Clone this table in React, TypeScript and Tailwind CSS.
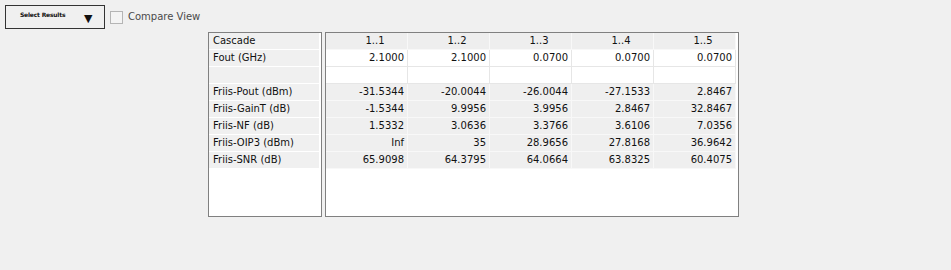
import React from "react";

const labels = [
  "Cascade",
  "Fout (GHz)",
  "",
  "Friis-Pout (dBm)",
  "Friis-GainT (dB)",
  "Friis-NF (dB)",
  "Friis-OIP3 (dBm)",
  "Friis-SNR (dB)",
];

const headers = ["1..1", "1..2", "1..3", "1..4", "1..5"];

const fout = ["2.1000", "2.1000", "0.0700", "0.0700", "0.0700"];

const data = [
  ["-31.5344", "-20.0044", "-26.0044", "-27.1533", "2.8467"],
  ["-1.5344", "9.9956", "3.9956", "2.8467", "32.8467"],
  ["1.5332", "3.0636", "3.3766", "3.6106", "7.0356"],
  ["Inf", "35", "28.9656", "27.8168", "36.9642"],
  ["65.9098", "64.3795", "64.0664", "63.8325", "60.4075"],
];

const font = { fontFamily: '"DejaVu Sans", Verdana, sans-serif' };

export default function App() {
  return (
    <div
      className="w-[951px] h-[270px] bg-[#f0f0f0] text-[10px] text-[#111111] overflow-hidden"
      style={font}
    >
      <div className="flex items-center pl-[5px] pt-[5px]">
        <div className="w-[100px] h-[24px] border border-[#333333] bg-[#f0f0f0] flex items-start pt-[6px] pl-[14px] relative">
          <span className="text-[6px] font-bold leading-none tracking-[-0.2px]">Select Results</span>
          <span className="absolute left-[78px] top-[7px] text-[11px] leading-none">▼</span>
        </div>
        <div className="ml-[5px] w-[13px] h-[13px] border border-[#b5b5b5] bg-[#f4f4f4]" />
        <span className="ml-[5px] text-[10px] text-[#4a4a4a] leading-none">Compare View</span>
      </div>

      <div className="flex pl-[208px] pt-[3px]">
        <div className="w-[114px] h-[185px] border border-[#808080] bg-white flex flex-col">
          {labels.map((l, i) => (
            <div
              key={i}
              className="w-[110px] h-[17px] bg-[#f0f0f0] border-b border-white pl-[4px] leading-[16px] whitespace-nowrap"
            >
              {l}
            </div>
          ))}
        </div>
        <div className="ml-[3px] w-[414px] h-[185px] border border-[#808080] bg-white flex flex-col">
          <div className="flex">
            {headers.map((h) => (
              <div
                key={h}
                className="w-[82px] h-[17px] bg-[#eeeeee] border-r border-b border-[#f8f8f8] text-center pl-[17px] leading-[16px]"
              >
                {h}
              </div>
            ))}
          </div>
          <div className="flex">
            {fout.map((v, j) => (
              <div
                key={j}
                className="w-[82px] h-[17px] bg-white border-r border-b border-[#e6e6e6] text-right pr-[3px] leading-[16px]"
              >
                {v}
              </div>
            ))}
          </div>
          <div className="flex">
            {fout.map((_, j) => (
              <div
                key={j}
                className="w-[82px] h-[17px] bg-white border-r border-b border-[#e6e6e6]"
              />
            ))}
          </div>
          {data.map((row, i) => (
            <div key={i} className="flex">
              {row.map((v, j) => (
                <div
                  key={j}
                  className="w-[82px] h-[17px] bg-[#efefef] border-r border-b border-[#f8f8f8] text-right pr-[3px] leading-[16px]"
                >
                  {v}
                </div>
              ))}
            </div>
          ))}
        </div>
      </div>
    </div>
  );
}
